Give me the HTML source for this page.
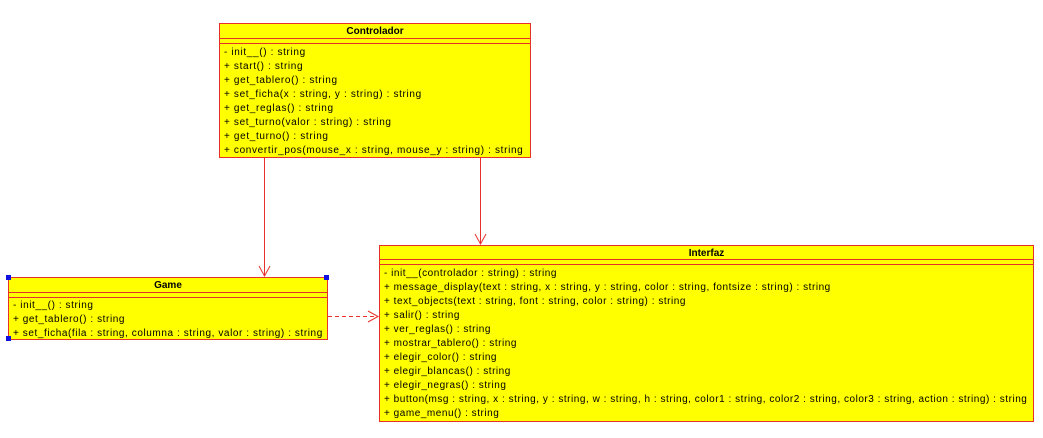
<!DOCTYPE html>
<html><head><style>
body{margin:0;width:1043px;height:438px;background:#fff;position:relative;overflow:hidden;font-family:"Liberation Sans",Arial,sans-serif;font-size:10px;color:#000}
.box{position:absolute;background:#ffff00;border:1px solid #e8302a;box-sizing:border-box}
.t{position:absolute;left:0;right:0;text-align:center;font-weight:bold;font-size:10px}
.hl{position:absolute;left:0;right:0;height:1px;background:#e8302a}
.m{position:absolute;left:4px;white-space:nowrap;line-height:14px;letter-spacing:0.58px}
.h{position:absolute;width:5px;height:5px;background:#1010e0}
</style></head><body>
<svg width="1043" height="438" style="position:absolute;left:0;top:0">
<g stroke="#e8302a" fill="none" stroke-width="1">
<line x1="264.5" y1="157" x2="264.5" y2="276"/>
<polyline points="259,266 264.5,276 270,266"/>
<line x1="480.5" y1="157" x2="480.5" y2="244"/>
<polyline points="475,234 480.5,244 486,234"/>
<line x1="328" y1="316.5" x2="378" y2="316.5" stroke-dasharray="4,3"/>
<polyline points="368,311 378,316.5 368,322"/>
</g></svg>

<div class="box" style="left:219px;top:23px;width:312px;height:135px">
<div class="t" style="top:2px">Controlador</div>
<div class="hl" style="top:14px"></div><div class="hl" style="top:19px"></div>
<div class="m" style="top:22px;letter-spacing:0.65px">- init__() : string<br>+ start() : string<br>+ get_tablero() : string<br>+ set_ficha(x : string, y : string) : string<br>+ get_reglas() : string<br>+ set_turno(valor : string) : string<br>+ get_turno() : string<br>+ convertir_pos(mouse_x : string, mouse_y : string) : string</div>
</div>

<div class="box" style="left:8px;top:277px;width:320px;height:63px">
<div class="t" style="top:2px">Game</div>
<div class="hl" style="top:14px"></div><div class="hl" style="top:19px"></div>
<div class="m" style="top:21px">- init__() : string<br>+ get_tablero() : string<br>+ set_ficha(fila : string, columna : string, valor : string) : string</div>
</div>
<div class="h" style="left:6px;top:275px"></div><div class="h" style="left:324px;top:275px"></div><div class="h" style="left:6px;top:336px"></div>

<div class="box" style="left:379px;top:245px;width:655px;height:177px">
<div class="t" style="top:2px">Interfaz</div>
<div class="hl" style="top:13px"></div><div class="hl" style="top:18px"></div>
<div class="m" style="top:21px;letter-spacing:0.53px">- init__(controlador : string) : string<br>+ message_display(text : string, x : string, y : string, color : string, fontsize : string) : string<br>+ text_objects(text : string, font : string, color : string) : string<br>+ salir() : string<br>+ ver_reglas() : string<br>+ mostrar_tablero() : string<br>+ elegir_color() : string<br>+ elegir_blancas() : string<br>+ elegir_negras() : string<br>+ button(msg : string, x : string, y : string, w : string, h : string, color1 : string, color2 : string, color3 : string, action : string) : string<br>+ game_menu() : string</div>
</div>
</body></html>
